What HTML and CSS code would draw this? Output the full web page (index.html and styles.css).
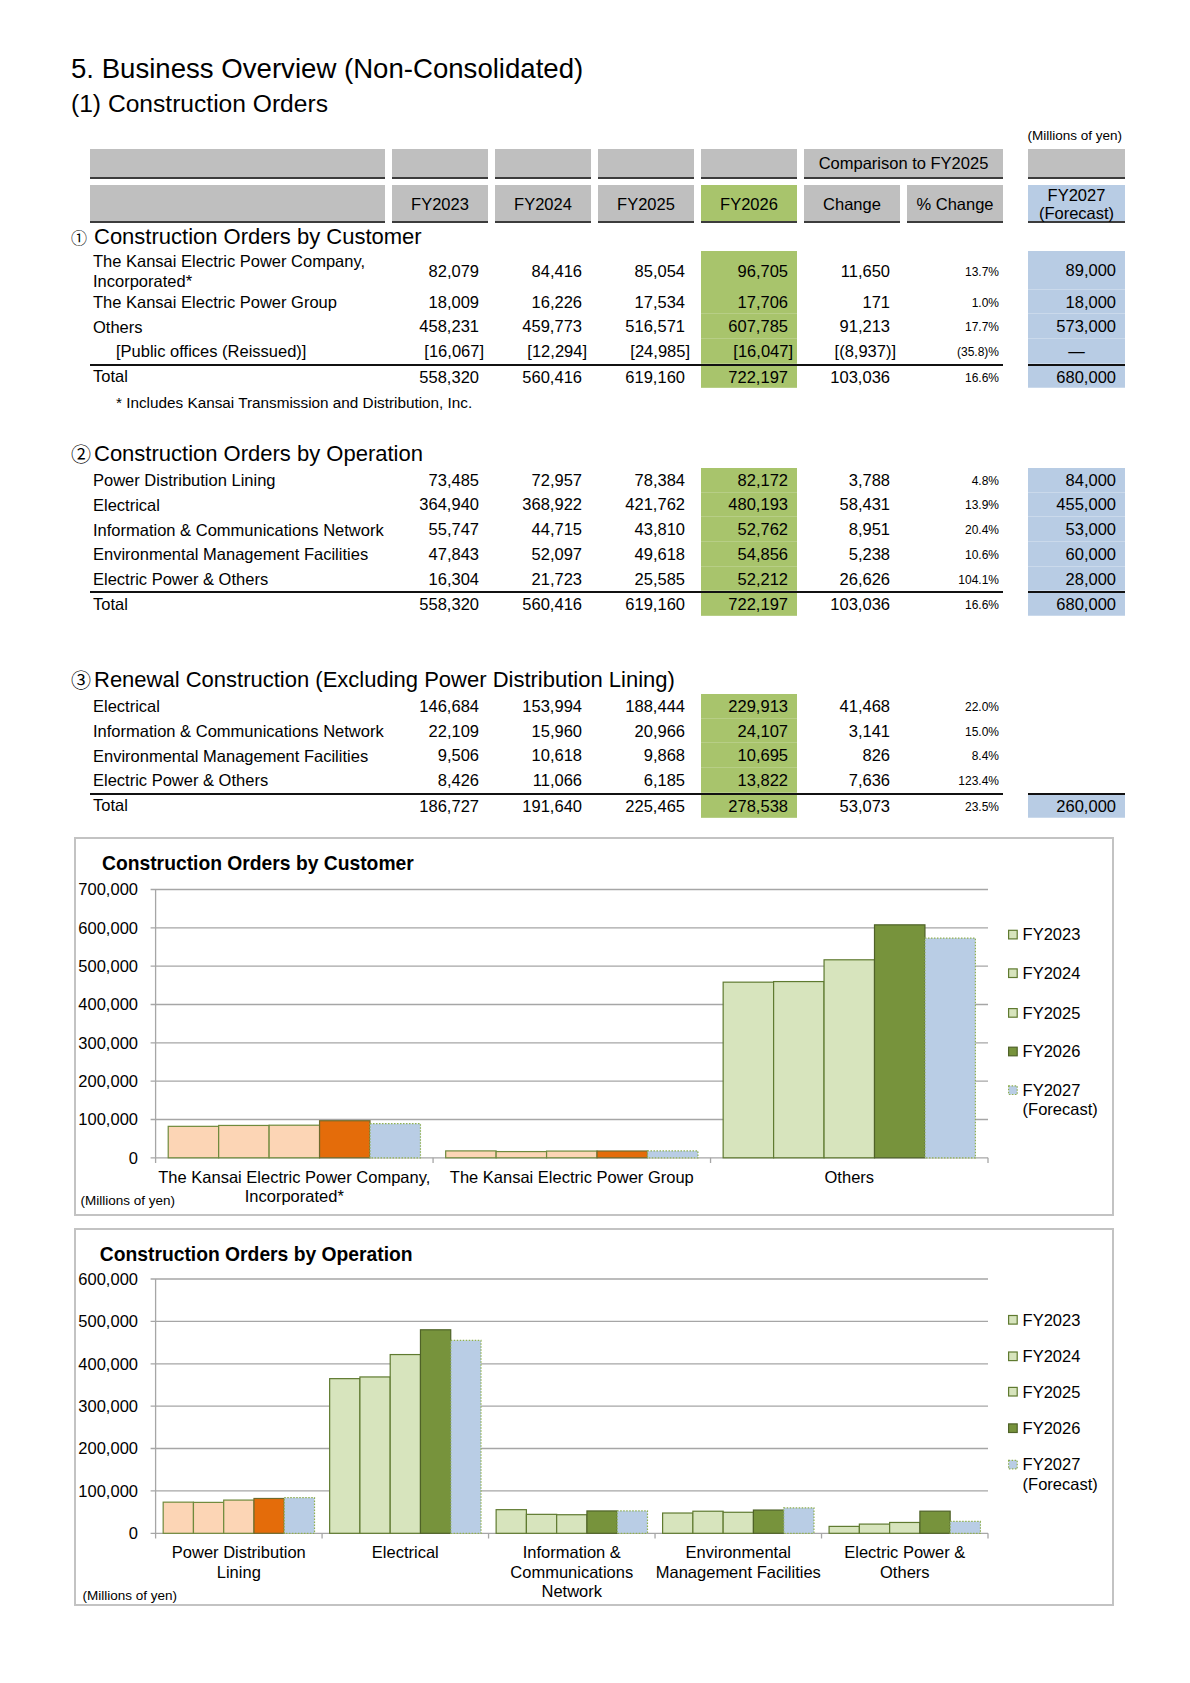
FILE: index.html
```html
<!DOCTYPE html>
<html lang="en">
<head>
<meta charset="utf-8">
<title>Business Overview</title>
<link rel="stylesheet" href="styles.css">
</head>
<body>
<div class="page">
  <h1 class="title">5. Business Overview (Non-Consolidated)</h1>
  <h2 class="subtitle">(1) Construction Orders</h2>
  <div class="unit">(Millions of yen)</div>

  <div class="tbl">
    <div class="row hr1">
      <div class="main">
        <div class="h"></div><div class="h"></div><div class="h"></div><div class="h"></div><div class="h"></div>
        <div class="h span2">Comparison to FY2025</div>
      </div>
      <div class="fc h"></div>
    </div>
    <div class="row hr2">
      <div class="main">
        <div class="h"></div><div class="h">FY2023</div><div class="h">FY2024</div><div class="h">FY2025</div><div class="h hg">FY2026</div><div class="h">Change</div><div class="h">% Change</div>
      </div>
      <div class="fc h hb two">FY2027<br>(Forecast)</div>
    </div>

    <div class="sec"><span class="cn cn1">①</span>Construction Orders by Customer</div>
    <div class="row d tall">
      <div class="main">
        <div class="lab">The Kansai Electric Power Company,<br>Incorporated*</div>
        <div class="n">82,079</div><div class="n">84,416</div><div class="n">85,054</div><div class="n g">96,705</div><div class="n chg">11,650</div><div class="n pct">13.7%</div>
      </div>
      <div class="fc n b">89,000</div>
    </div>
    <div class="row d">
      <div class="main">
        <div class="lab">The Kansai Electric Power Group</div>
        <div class="n">18,009</div><div class="n">16,226</div><div class="n">17,534</div><div class="n g">17,706</div><div class="n chg">171</div><div class="n pct">1.0%</div>
      </div>
      <div class="fc n b">18,000</div>
    </div>
    <div class="row d">
      <div class="main">
        <div class="lab">Others</div>
        <div class="n">458,231</div><div class="n">459,773</div><div class="n">516,571</div><div class="n g">607,785</div><div class="n chg">91,213</div><div class="n pct">17.7%</div>
      </div>
      <div class="fc n b">573,000</div>
    </div>
    <div class="row d">
      <div class="main">
        <div class="lab ind">[Public offices (Reissued)]</div>
        <div class="n br">[16,067]</div><div class="n br">[12,294]</div><div class="n br">[24,985]</div><div class="n g br">[16,047]</div><div class="n chg br">[(8,937)]</div><div class="n pct">(35.8)%</div>
      </div>
      <div class="fc n b ctr">—</div>
    </div>
    <div class="row d tot">
      <div class="main">
        <div class="lab">Total</div>
        <div class="n">558,320</div><div class="n">560,416</div><div class="n">619,160</div><div class="n g">722,197</div><div class="n chg">103,036</div><div class="n pct">16.6%</div>
      </div>
      <div class="fc n b">680,000</div>
    </div>
    <div class="note">* Includes Kansai Transmission and Distribution, Inc.</div>
    <div class="sp1"></div>

    <div class="sec"><span class="cn">②</span>Construction Orders by Operation</div>
    <div class="row d">
      <div class="main">
        <div class="lab">Power Distribution Lining</div>
        <div class="n">73,485</div><div class="n">72,957</div><div class="n">78,384</div><div class="n g">82,172</div><div class="n chg">3,788</div><div class="n pct">4.8%</div>
      </div>
      <div class="fc n b">84,000</div>
    </div>
    <div class="row d">
      <div class="main">
        <div class="lab">Electrical</div>
        <div class="n">364,940</div><div class="n">368,922</div><div class="n">421,762</div><div class="n g">480,193</div><div class="n chg">58,431</div><div class="n pct">13.9%</div>
      </div>
      <div class="fc n b">455,000</div>
    </div>
    <div class="row d">
      <div class="main">
        <div class="lab">Information &amp; Communications Network</div>
        <div class="n">55,747</div><div class="n">44,715</div><div class="n">43,810</div><div class="n g">52,762</div><div class="n chg">8,951</div><div class="n pct">20.4%</div>
      </div>
      <div class="fc n b">53,000</div>
    </div>
    <div class="row d">
      <div class="main">
        <div class="lab">Environmental Management Facilities</div>
        <div class="n">47,843</div><div class="n">52,097</div><div class="n">49,618</div><div class="n g">54,856</div><div class="n chg">5,238</div><div class="n pct">10.6%</div>
      </div>
      <div class="fc n b">60,000</div>
    </div>
    <div class="row d">
      <div class="main">
        <div class="lab">Electric Power &amp; Others</div>
        <div class="n">16,304</div><div class="n">21,723</div><div class="n">25,585</div><div class="n g">52,212</div><div class="n chg">26,626</div><div class="n pct">104.1%</div>
      </div>
      <div class="fc n b">28,000</div>
    </div>
    <div class="row d tot">
      <div class="main">
        <div class="lab">Total</div>
        <div class="n">558,320</div><div class="n">560,416</div><div class="n">619,160</div><div class="n g">722,197</div><div class="n chg">103,036</div><div class="n pct">16.6%</div>
      </div>
      <div class="fc n b">680,000</div>
    </div>
    <div class="sp2"></div>

    <div class="sec"><span class="cn">③</span>Renewal Construction (Excluding Power Distribution Lining)</div>
    <div class="row d">
      <div class="main">
        <div class="lab">Electrical</div>
        <div class="n">146,684</div><div class="n">153,994</div><div class="n">188,444</div><div class="n g">229,913</div><div class="n chg">41,468</div><div class="n pct">22.0%</div>
      </div>
      <div class="fc"></div>
    </div>
    <div class="row d">
      <div class="main">
        <div class="lab">Information &amp; Communications Network</div>
        <div class="n">22,109</div><div class="n">15,960</div><div class="n">20,966</div><div class="n g">24,107</div><div class="n chg">3,141</div><div class="n pct">15.0%</div>
      </div>
      <div class="fc"></div>
    </div>
    <div class="row d">
      <div class="main">
        <div class="lab">Environmental Management Facilities</div>
        <div class="n">9,506</div><div class="n">10,618</div><div class="n">9,868</div><div class="n g">10,695</div><div class="n chg">826</div><div class="n pct">8.4%</div>
      </div>
      <div class="fc"></div>
    </div>
    <div class="row d">
      <div class="main">
        <div class="lab">Electric Power &amp; Others</div>
        <div class="n">8,426</div><div class="n">11,066</div><div class="n">6,185</div><div class="n g">13,822</div><div class="n chg">7,636</div><div class="n pct">123.4%</div>
      </div>
      <div class="fc"></div>
    </div>
    <div class="row d tot">
      <div class="main">
        <div class="lab">Total</div>
        <div class="n">186,727</div><div class="n">191,640</div><div class="n">225,465</div><div class="n g">278,538</div><div class="n chg">53,073</div><div class="n pct">23.5%</div>
      </div>
      <div class="fc n b">260,000</div>
    </div>
  </div>

  <div class="chart chart1">
    <svg class="plot" viewBox="2 2 1036 375" width="1036" height="375">
      <text class="ctitle" x="28" y="32.6">Construction Orders by Customer</text>
      <g class="grid">
        <line x1="76.6" y1="52.5" x2="914" y2="52.5"/>
        <line x1="76.6" y1="90.8" x2="914" y2="90.8"/>
        <line x1="76.6" y1="129.2" x2="914" y2="129.2"/>
        <line x1="76.6" y1="167.5" x2="914" y2="167.5"/>
        <line x1="76.6" y1="205.8" x2="914" y2="205.8"/>
        <line x1="76.6" y1="244.1" x2="914" y2="244.1"/>
        <line x1="76.6" y1="282.5" x2="914" y2="282.5"/>
        <line x1="76.6" y1="320.8" x2="914" y2="320.8"/>
        <line x1="81.6" y1="52.5" x2="81.6" y2="320.8"/>
        <line x1="81.6" y1="320.8" x2="81.6" y2="326"/>
        <line x1="359.07" y1="320.8" x2="359.07" y2="326"/>
        <line x1="636.54" y1="320.8" x2="636.54" y2="326"/>
        <line x1="914" y1="320.8" x2="914" y2="326"/>
      </g>
      <g class="ylab">
        <text x="64" y="58.3">700,000</text>
        <text x="64" y="96.6">600,000</text>
        <text x="64" y="135">500,000</text>
        <text x="64" y="173.3">400,000</text>
        <text x="64" y="211.6">300,000</text>
        <text x="64" y="249.9">200,000</text>
        <text x="64" y="288.3">100,000</text>
        <text x="64" y="326.6">0</text>
      </g>
      <g>
        <rect class="pe" x="94.21" y="289.34" width="50.45" height="31.46"/>
        <rect class="pe" x="144.66" y="288.44" width="50.45" height="32.36"/>
        <rect class="pe" x="195.11" y="288.2" width="50.45" height="32.6"/>
        <rect class="or" x="245.56" y="283.73" width="50.45" height="37.07"/>
        <rect class="bl" x="296.01" y="286.69" width="50.45" height="34.11"/>

        <rect class="pe" x="371.68" y="313.9" width="50.45" height="6.9"/>
        <rect class="pe" x="422.13" y="314.58" width="50.45" height="6.22"/>
        <rect class="pe" x="472.58" y="314.08" width="50.45" height="6.72"/>
        <rect class="or" x="523.03" y="314.01" width="50.45" height="6.79"/>
        <rect class="bl" x="573.48" y="313.9" width="50.45" height="6.9"/>

        <rect class="lg" x="649.15" y="145.16" width="50.45" height="175.64"/>
        <rect class="lg" x="699.6" y="144.57" width="50.45" height="176.23"/>
        <rect class="lg" x="750.05" y="122.8" width="50.45" height="198"/>
        <rect class="dg" x="800.5" y="87.84" width="50.45" height="232.96"/>
        <rect class="bl" x="850.95" y="101.17" width="50.45" height="219.63"/>
      </g>
      <g class="xlab">
        <text x="220.3" y="345.8">The Kansai Electric Power Company,</text>
        <text x="220.3" y="364.8">Incorporated*</text>
        <text x="497.8" y="345.8">The Kansai Electric Power Group</text>
        <text x="775.3" y="345.8">Others</text>
      </g>
      <text class="munit" x="6.5" y="368.4">(Millions of yen)</text>
      <g class="legend">
        <rect class="lg" x="934.6" y="93.3" width="8.6" height="8.6"/>
        <rect class="lg" x="934.6" y="131.9" width="8.6" height="8.6"/>
        <rect class="lg" x="934.6" y="171.6" width="8.6" height="8.6"/>
        <rect class="dg" x="934.6" y="210.2" width="8.6" height="8.6"/>
        <rect class="bl" x="934.6" y="248.9" width="8.6" height="8.6"/>
        <text x="948.6" y="103.4">FY2023</text>
        <text x="948.6" y="142">FY2024</text>
        <text x="948.6" y="181.7">FY2025</text>
        <text x="948.6" y="220.3">FY2026</text>
        <text x="948.6" y="259">FY2027</text>
        <text x="948.6" y="278.3">(Forecast)</text>
      </g>
    </svg>
  </div>

  <div class="chart chart2">
    <svg class="plot" viewBox="2 2 1036 374" width="1036" height="374">
      <text class="ctitle" x="25.8" y="33.1">Construction Orders by Operation</text>
      <g class="grid">
        <line x1="76.6" y1="51" x2="914" y2="51"/>
        <line x1="76.6" y1="93.4" x2="914" y2="93.4"/>
        <line x1="76.6" y1="135.8" x2="914" y2="135.8"/>
        <line x1="76.6" y1="178.2" x2="914" y2="178.2"/>
        <line x1="76.6" y1="220.5" x2="914" y2="220.5"/>
        <line x1="76.6" y1="262.9" x2="914" y2="262.9"/>
        <line x1="76.6" y1="305.3" x2="914" y2="305.3"/>
        <line x1="81.6" y1="51" x2="81.6" y2="305.3"/>
        <line x1="81.6" y1="305.3" x2="81.6" y2="310.5"/>
        <line x1="248.08" y1="305.3" x2="248.08" y2="310.5"/>
        <line x1="414.56" y1="305.3" x2="414.56" y2="310.5"/>
        <line x1="581.04" y1="305.3" x2="581.04" y2="310.5"/>
        <line x1="747.52" y1="305.3" x2="747.52" y2="310.5"/>
        <line x1="914" y1="305.3" x2="914" y2="310.5"/>
      </g>
      <g class="ylab">
        <text x="64" y="56.8">600,000</text>
        <text x="64" y="99.2">500,000</text>
        <text x="64" y="141.6">400,000</text>
        <text x="64" y="184">300,000</text>
        <text x="64" y="226.3">200,000</text>
        <text x="64" y="268.7">100,000</text>
        <text x="64" y="311.1">0</text>
      </g>
      <g>
        <rect class="pe" x="89.17" y="274.16" width="30.27" height="31.14"/>
        <rect class="pe" x="119.44" y="274.38" width="30.27" height="30.92"/>
        <rect class="pe" x="149.71" y="272.08" width="30.27" height="33.22"/>
        <rect class="or" x="179.98" y="270.48" width="30.27" height="34.82"/>
        <rect class="bl" x="210.25" y="269.7" width="30.27" height="35.6"/>

        <rect class="lg" x="255.65" y="150.64" width="30.27" height="154.66"/>
        <rect class="lg" x="285.92" y="148.95" width="30.27" height="156.35"/>
        <rect class="lg" x="316.19" y="126.56" width="30.27" height="178.74"/>
        <rect class="dg" x="346.46" y="101.79" width="30.27" height="203.51"/>
        <rect class="bl" x="376.73" y="112.47" width="30.27" height="192.83"/>

        <rect class="lg" x="422.13" y="281.67" width="30.27" height="23.63"/>
        <rect class="lg" x="452.4" y="286.35" width="30.27" height="18.95"/>
        <rect class="lg" x="482.67" y="286.73" width="30.27" height="18.57"/>
        <rect class="dg" x="512.94" y="282.94" width="30.27" height="22.36"/>
        <rect class="bl" x="543.21" y="282.84" width="30.27" height="22.46"/>

        <rect class="lg" x="588.61" y="285.02" width="30.27" height="20.28"/>
        <rect class="lg" x="618.88" y="283.22" width="30.27" height="22.08"/>
        <rect class="lg" x="649.15" y="284.27" width="30.27" height="21.03"/>
        <rect class="dg" x="679.42" y="282.05" width="30.27" height="23.25"/>
        <rect class="bl" x="709.69" y="279.87" width="30.27" height="25.43"/>

        <rect class="lg" x="755.09" y="298.39" width="30.27" height="6.91"/>
        <rect class="lg" x="785.36" y="296.09" width="30.27" height="9.21"/>
        <rect class="lg" x="815.63" y="294.46" width="30.27" height="10.84"/>
        <rect class="dg" x="845.9" y="283.17" width="30.27" height="22.13"/>
        <rect class="bl" x="876.17" y="293.43" width="30.27" height="11.87"/>
      </g>
      <g class="xlab">
        <text x="164.8" y="330.4">Power Distribution</text>
        <text x="164.8" y="349.8">Lining</text>
        <text x="331.3" y="330.4">Electrical</text>
        <text x="497.8" y="330.4">Information &amp;</text>
        <text x="497.8" y="349.8">Communications</text>
        <text x="497.8" y="369.1">Network</text>
        <text x="664.3" y="330.4">Environmental</text>
        <text x="664.3" y="349.8">Management Facilities</text>
        <text x="830.8" y="330.4">Electric Power &amp;</text>
        <text x="830.8" y="349.8">Others</text>
      </g>
      <text class="munit" x="8.6" y="372.2">(Millions of yen)</text>
      <g class="legend">
        <rect class="lg" x="934.6" y="87.5" width="8.6" height="8.6"/>
        <rect class="lg" x="934.6" y="124" width="8.6" height="8.6"/>
        <rect class="lg" x="934.6" y="159.4" width="8.6" height="8.6"/>
        <rect class="dg" x="934.6" y="195.9" width="8.6" height="8.6"/>
        <rect class="bl" x="934.6" y="232.3" width="8.6" height="8.6"/>
        <text x="948.6" y="97.6">FY2023</text>
        <text x="948.6" y="134.1">FY2024</text>
        <text x="948.6" y="169.5">FY2025</text>
        <text x="948.6" y="206">FY2026</text>
        <text x="948.6" y="242.4">FY2027</text>
        <text x="948.6" y="261.8">(Forecast)</text>
      </g>
    </svg>
  </div>
</div>
</body>
</html>
```

FILE: styles.css
```css
html, body {
  margin: 0;
  padding: 0;
  background: #ffffff;
}

body {
  font-family: "Liberation Sans", Arial, "Noto Sans CJK JP", sans-serif;
  color: #000000;
}

.page {
  width: 1190px;
  padding-top: 53px;
  padding-bottom: 60px;
}

.title {
  margin: 0 0 0 71px;
  font-size: 27.6px;
  font-weight: normal;
  line-height: 32px;
}

.subtitle {
  margin: 4px 0 0 71px;
  font-size: 24.6px;
  font-weight: normal;
  line-height: 30px;
}

.unit {
  margin-top: 9px;
  width: 1122px;
  height: 16px;
  line-height: 16px;
  font-size: 13.5px;
  text-align: right;
}

/* ---------- table ---------- */
.tbl {
  margin-left: 90px;
  margin-top: 5px;
  font-size: 16.5px;
}

.row {
  display: flex;
}

.main {
  display: grid;
  grid-template-columns: 295px repeat(6, 96px);
  column-gap: 7px;
  box-sizing: border-box;
}

.fc {
  margin-left: 25px;
  width: 97px;
  box-sizing: border-box;
}

.h {
  background: #bfbfbf;
  border-bottom: 2px solid #3c3c3c;
  box-sizing: border-box;
  display: flex;
  align-items: center;
  justify-content: center;
  text-align: center;
}

.span2 {
  grid-column: span 2;
}

.hr1 {
  height: 30px;
}

.hr1 .h {
  padding-top: 1px;
}

.hr2 {
  height: 38.5px;
  margin-top: 5.5px;
}

.hr2 .h {
  padding-top: 3px;
}

.hr2 .two {
  line-height: 18px;
  padding-top: 2px;
}

.hg {
  background: #a8c46c;
}

.hb {
  background: #b8cce4;
}

.sec {
  margin-left: -19px;
  height: 28px;
  line-height: 28px;
  font-size: 22px;
  white-space: nowrap;
}

.cn {
  display: inline-block;
  width: 23px;
  font-family: "Noto Sans CJK JP", "DejaVu Sans", sans-serif;
  font-size: 20px;
  vertical-align: top;
}

.cn1 {
  font-size: 16px;
}

.d {
  height: 24.7px;
}

.d.tall {
  height: 38.7px;
}

.d .main,
.d .fc {
  height: 100%;
}

.lab {
  display: flex;
  align-items: center;
  padding-left: 3px;
  line-height: 20.3px;
  white-space: nowrap;
}

.lab.ind {
  padding-left: 26px;
}

.n {
  display: flex;
  align-items: center;
  justify-content: flex-end;
  padding-right: 9px;
  white-space: nowrap;
}

.n.chg {
  padding-right: 10px;
}

.n.pct {
  font-size: 12px;
  padding-right: 4px;
  padding-top: 1px;
}

.fc.n {
  padding-right: 9px;
}

.n.br {
  padding-right: 4px;
}

.n.ctr {
  justify-content: center;
  padding-right: 0;
}

.g {
  background: #a8c46c;
  box-shadow: inset 0 -1px 0 rgba(255, 255, 255, 0.18);
}

.b {
  background: #b8cce4;
  box-shadow: inset 0 -1px 0 rgba(255, 255, 255, 0.25);
}

.tot .main,
.tot .fc.b {
  border-top: 2px solid #111111;
}

.tot .lab {
  padding-bottom: 2px;
}

.note {
  height: 24.5px;
  line-height: 24.5px;
  padding-top: 3px;
  box-sizing: border-box;
  padding-left: 26px;
  font-size: 15.3px;
}

.sp1 {
  height: 27px;
}

.sp2 {
  height: 50px;
}

/* ---------- charts ---------- */
.chart {
  margin-left: 74px;
  width: 1040px;
  box-sizing: border-box;
  border: 2px solid #c3c3c3;
  background: #ffffff;
}

.chart1 {
  margin-top: 19.5px;
  height: 379px;
}

.chart2 {
  margin-top: 12px;
  height: 378px;
}

.plot {
  display: block;
  overflow: visible;
}

.plot text {
  font-family: "Liberation Sans", Arial, sans-serif;
  font-size: 16.5px;
  fill: #000000;
}

.plot .ctitle {
  font-size: 19.3px;
  font-weight: bold;
}

.ylab text {
  text-anchor: end;
}

.xlab text {
  text-anchor: middle;
}

.plot .munit {
  font-size: 13.5px;
}

.grid line {
  stroke: #a6a6a6;
  stroke-width: 1.3;
}

.pe {
  fill: #fcd5b5;
  stroke: #6f8a3c;
  stroke-width: 1.2;
}

.or {
  fill: #e46c0a;
  stroke: #6f6a2c;
  stroke-width: 1.2;
}

.lg {
  fill: #d7e4bd;
  stroke: #5f7a30;
  stroke-width: 1.2;
}

.dg {
  fill: #77933c;
  stroke: #4f6228;
  stroke-width: 1.2;
}

.bl {
  fill: #b9cde5;
  stroke: #8fb050;
  stroke-width: 1.2;
  stroke-dasharray: 1.5 1.5;
}
```
